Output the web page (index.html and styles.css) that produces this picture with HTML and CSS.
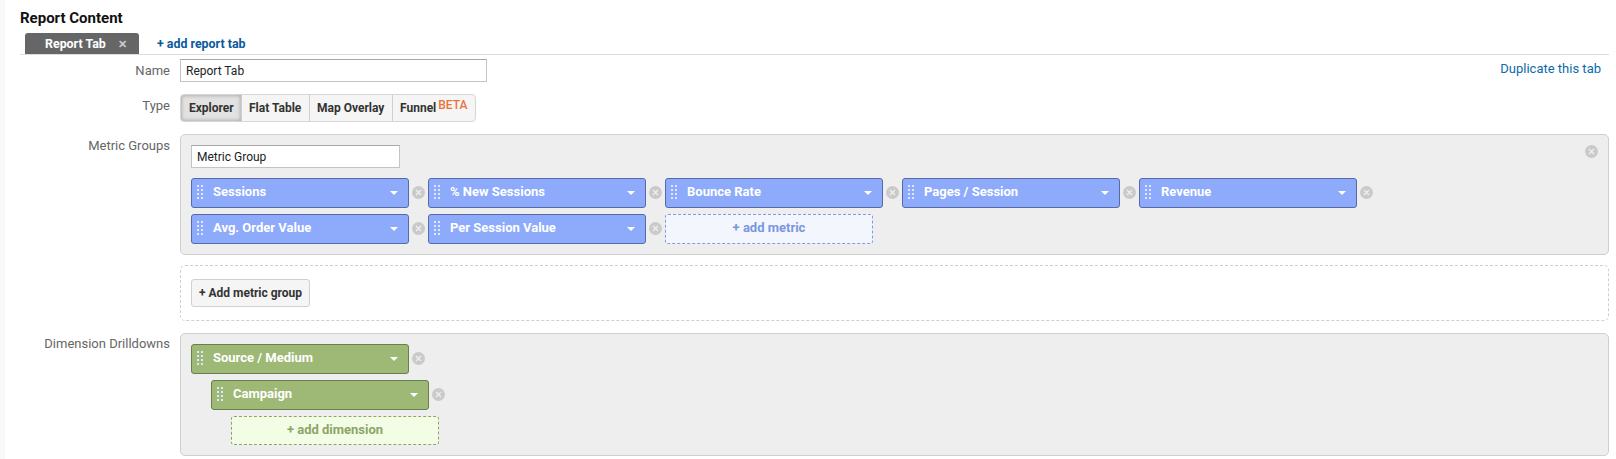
FILE: index.html
```html
<!DOCTYPE html>
<html lang="en">
<head>
    <meta charset="UTF-8">
    <title>Report Content</title>
    <link rel="stylesheet" href="styles.css">
</head>
<body>
    <svg class="icon-defs" width="0" height="0">
        <symbol id="remove" viewBox="0 0 13 13">
            <circle cx="6.5" cy="6.5" r="6.5" fill="#cacaca"/>
            <path d="M4 4l5 5M9 4l-5 5" stroke="#eeeeee" stroke-width="1.4" fill="none"/>
        </symbol>
        <symbol id="grip" viewBox="0 0 6 14">
            <path d="M0 0h2v2H0zM4 0h2v2H4zM0 4h2v2H0zM4 4h2v2H4zM0 8h2v2H0zM4 8h2v2H4zM0 12h2v2H0zM4 12h2v2H4z" fill="#dfe7ff"/>
        </symbol>
    </svg>

    <div class="page">
        <h2 class="page-title">Report Content</h2>

        <div class="tab-bar">
            <div class="tab">Report Tab <span class="tab-close">✕</span></div>
            <a class="add-tab">+ add report tab</a>
        </div>

        <div class="form-row name-row">
            <div class="form-label">Name</div>
            <input class="text-input name-input" type="text" value="Report Tab">
            <a class="duplicate-link">Duplicate this tab</a>
        </div>

        <div class="form-row type-row">
            <div class="form-label">Type</div>
            <div class="type-buttons">
                <div class="type-btn explorer active">Explorer</div>
                <div class="type-btn flat">Flat Table</div>
                <div class="type-btn map">Map Overlay</div>
                <div class="type-btn map">Funnel<span class="beta">BETA</span></div>
            </div>
        </div>

        <div class="form-row">
            <div class="form-label metric-label">Metric Groups</div>
            <div class="panel metric-panel">
                <svg class="remove panel-remove"><use href="#remove"/></svg>
                <input class="text-input group-input" type="text" value="Metric Group">
                <div class="pill-rows">
                    <div class="pill-row">
                        <div class="pill-wrap">
                            <div class="pill metric"><svg class="grip"><use href="#grip"/></svg><span class="pill-name">Sessions</span><span class="caret"></span></div>
                            <svg class="remove"><use href="#remove"/></svg>
                        </div>
                        <div class="pill-wrap">
                            <div class="pill metric"><svg class="grip"><use href="#grip"/></svg><span class="pill-name">% New Sessions</span><span class="caret"></span></div>
                            <svg class="remove"><use href="#remove"/></svg>
                        </div>
                        <div class="pill-wrap">
                            <div class="pill metric"><svg class="grip"><use href="#grip"/></svg><span class="pill-name">Bounce Rate</span><span class="caret"></span></div>
                            <svg class="remove"><use href="#remove"/></svg>
                        </div>
                        <div class="pill-wrap">
                            <div class="pill metric"><svg class="grip"><use href="#grip"/></svg><span class="pill-name">Pages / Session</span><span class="caret"></span></div>
                            <svg class="remove"><use href="#remove"/></svg>
                        </div>
                        <div class="pill-wrap">
                            <div class="pill metric"><svg class="grip"><use href="#grip"/></svg><span class="pill-name">Revenue</span><span class="caret"></span></div>
                            <svg class="remove"><use href="#remove"/></svg>
                        </div>
                    </div>
                    <div class="pill-row">
                        <div class="pill-wrap">
                            <div class="pill metric"><svg class="grip"><use href="#grip"/></svg><span class="pill-name">Avg. Order Value</span><span class="caret"></span></div>
                            <svg class="remove"><use href="#remove"/></svg>
                        </div>
                        <div class="pill-wrap">
                            <div class="pill metric"><svg class="grip"><use href="#grip"/></svg><span class="pill-name">Per Session Value</span><span class="caret"></span></div>
                            <svg class="remove"><use href="#remove"/></svg>
                        </div>
                        <div class="add-slot add-metric">+ add metric</div>
                    </div>
                </div>
            </div>
        </div>

        <div class="form-row">
            <div class="form-label"></div>
            <div class="add-group-box">
                <div class="add-group-btn">+ Add metric group</div>
            </div>
        </div>

        <div class="form-row">
            <div class="form-label dimension-label">Dimension Drilldowns</div>
            <div class="panel dimension-panel">
                <div class="pill-wrap">
                    <div class="pill dimension"><svg class="grip"><use href="#grip"/></svg><span class="pill-name">Source / Medium</span><span class="caret"></span></div>
                    <svg class="remove"><use href="#remove"/></svg>
                </div>
                <div class="pill-wrap indent-1">
                    <div class="pill dimension"><svg class="grip"><use href="#grip"/></svg><span class="pill-name">Campaign</span><span class="caret"></span></div>
                    <svg class="remove"><use href="#remove"/></svg>
                </div>
                <div class="add-slot add-dimension indent-2">+ add dimension</div>
            </div>
        </div>
    </div>
</body>
</html>
```

FILE: styles.css
```css
* {
    margin: 0;
    padding: 0;
    box-sizing: border-box;
}

html, body {
    height: 100%;
    overflow: hidden;
}

body {
    font-family: Roboto, 'Liberation Sans', sans-serif;
    font-size: 12px;
    background: #f8f9fb;
    color: #333;
}

.icon-defs {
    display: block;
}

.page {
    margin-left: 5px;
    height: 459px;
    background: #fff;
    padding: 10px 7px 0 15px;
}

.page-title {
    font-size: 15px;
    font-weight: 700;
    line-height: 17px;
    color: #111;
}

/* tabs */
.tab-bar {
    display: flex;
    align-items: stretch;
    height: 22px;
    margin-top: 6px;
    padding-left: 5px;
    border-bottom: 1px solid #dcdcdc;
}

.tab {
    width: 114px;
    height: 21px;
    padding-left: 20px;
    line-height: 22px;
    font-size: 12.4px;
    font-weight: 700;
    color: #fff;
    background: #666;
    border-radius: 3px 3px 0 0;
}

.tab-close {
    margin-left: 9px;
    font-size: 11px;
    font-weight: 700;
    color: #ccc;
}

.add-tab {
    margin-left: 18px;
    line-height: 22px;
    font-size: 12.4px;
    font-weight: 700;
    color: #0b5a9c;
}

/* form rows */
.form-row {
    display: flex;
    align-items: flex-start;
}

.form-label {
    flex: none;
    width: 150px;
    margin-right: 10px;
    text-align: right;
    color: #666;
    line-height: 16px;
    font-size: 13px;
}

.text-input {
    display: block;
    height: 23px;
    padding: 0 5px;
    font: 12px Roboto, 'Liberation Sans', sans-serif;
    color: #222;
    background: #fff;
    border: 1px solid #c4c4c4;
    border-top-color: #a8a8a8;
    outline: none;
}

.name-row {
    margin-top: 4px;
}

.name-row .form-label {
    padding-top: 4px;
}

.name-input {
    width: 307px;
}

.duplicate-link {
    margin-left: auto;
    margin-right: 8px;
    padding-top: 2px;
    line-height: 16px;
    font-size: 13px;
    color: #0b6aab;
}

.type-row {
    margin-top: 12px;
}

.type-row .form-label {
    padding-top: 4px;
}

.type-buttons {
    display: flex;
    height: 28px;
    border: 1px solid #d6d6d6;
    border-radius: 4px;
    background: #f5f5f5;
    overflow: hidden;
}

.type-btn {
    padding-left: 7px;
    line-height: 26px;
    font-weight: 700;
    color: #333;
    border-left: 1px solid #d0d0d0;
    white-space: nowrap;
}

.type-btn.explorer {
    width: 60px;
    padding-left: 8px;
    border-left: none;
}

.type-btn.flat {
    width: 68px;
}

.type-btn.map {
    width: 83px;
}

.type-btn.active {
    background: #e2e2e2;
    box-shadow: inset 0 0 4px #999;
}

.beta {
    position: relative;
    top: -3px;
    margin-left: 2px;
    font-size: 12px;
    font-weight: 500;
    color: #e8743b;
}

/* panels */
.panel {
    position: relative;
    flex: 1;
    background: #eeeeee;
    border: 1px solid #cfcfcf;
    border-radius: 5px;
}

.metric-panel {
    height: 121px;
    margin-top: 12px;
    padding: 10px;
}

.metric-label {
    padding-top: 16px;
}

.dimension-label {
    padding-top: 15px;
}

.group-input {
    width: 209px;
}

.pill-rows {
    margin-top: 10px;
    display: flex;
    flex-direction: column;
    gap: 6px;
}

.pill-row {
    display: flex;
    gap: 3px;
}

.pill-wrap {
    display: flex;
    align-items: center;
    gap: 3px;
}

.pill {
    display: flex;
    align-items: center;
    width: 218px;
    height: 30px;
    padding: 0 8px 0 5px;
    border-radius: 3px;
    font-size: 13px;
    font-weight: 700;
    color: #fff;
}

.pill.metric {
    background: #8eaafb;
    border: 1px solid #556aa8;
}

.pill.dimension {
    background: #9eb876;
    border: 1px solid #68804a;
}

.grip {
    flex: none;
    width: 6px;
    height: 14px;
    margin-bottom: 3px;
}

.pill-name {
    flex: 1;
    margin-left: 10px;
    margin-bottom: 3px;
}

.caret {
    flex: none;
    width: 0;
    height: 0;
    margin-right: 2px;
    margin-bottom: 1px;
    border-left: 4px solid transparent;
    border-right: 4px solid transparent;
    border-top: 4px solid #fff;
}

.remove {
    flex: none;
    width: 13px;
    height: 13px;
    margin-bottom: 2px;
}

.panel-remove {
    position: absolute;
    top: 10px;
    right: 10px;
}

/* dashed slots */
.add-slot {
    width: 208px;
    height: 30px;
    line-height: 26px;
    text-align: center;
    font-size: 13px;
    font-weight: 700;
    border-radius: 3px;
}

.add-metric {
    color: #7a96e0;
    background: #f3f6fd;
    border: 1px dashed #7f9be6;
}

.add-dimension {
    color: #8da468;
    background: #f3fde6;
    border: 1px dashed #8da468;
}

.add-group-box {
    flex: 1;
    height: 56px;
    margin-top: 10px;
    padding: 13px 10px;
    border: 1px dashed #cfcfcf;
    border-radius: 5px;
}

.add-group-btn {
    width: 119px;
    height: 28px;
    line-height: 26px;
    text-align: center;
    font-weight: 700;
    color: #333;
    background: #f5f5f5;
    border: 1px solid #d0d0d0;
    border-radius: 3px;
}

.dimension-panel {
    height: 123px;
    margin-top: 12px;
    padding: 10px;
    display: flex;
    flex-direction: column;
    gap: 6px;
}

.indent-1 {
    margin-left: 20px;
}

.indent-2 {
    margin-left: 40px;
}
```
